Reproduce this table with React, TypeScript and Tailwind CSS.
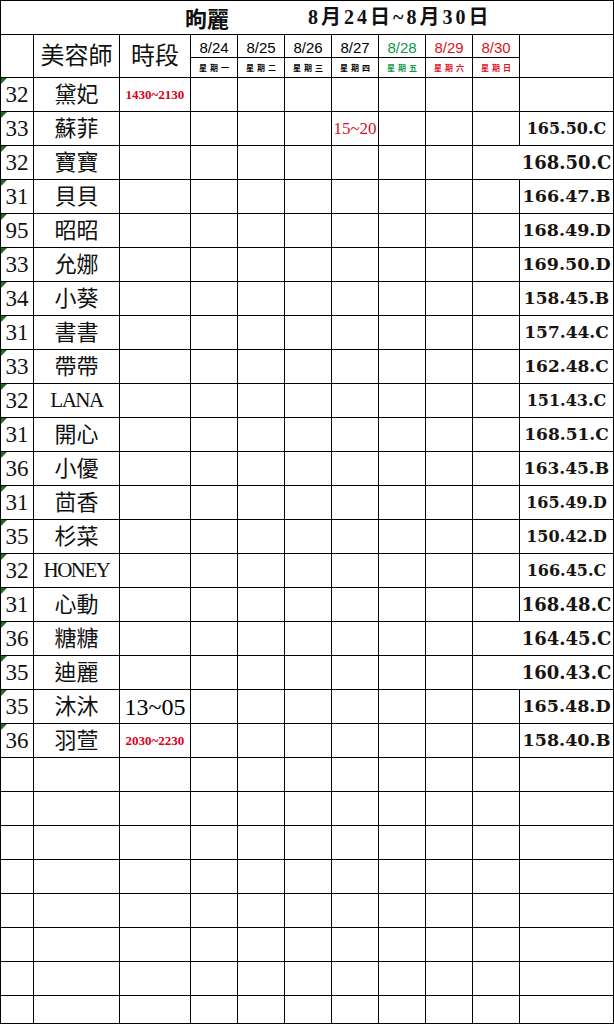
import React from "react"

type Row = {
  no: string
  name: string
  time?: { text: string; cls: string }
  mark?: string // text in the 8/27 column
  val?: string
  valCls?: string
  spill?: boolean // value runs over into the 8/30 column (no line between)
}

const serif = "font-['Liberation_Serif','Noto_Sans_CJK_TC',serif]"
const redSmall = "text-[13px] font-bold text-[#d90018]"

const rows: Row[] = [
  { no: "32", name: "黛妃", time: { text: "1430~2130", cls: redSmall } },
  { no: "33", name: "蘇菲", mark: "15~20", val: "165.50.C", valCls: "text-[16px]" },
  { no: "32", name: "寶寶", val: "168.50.C", valCls: "text-[18px]", spill: true },
  { no: "31", name: "貝貝", val: "166.47.B", valCls: "text-[17.5px]" },
  { no: "95", name: "昭昭", val: "168.49.D", valCls: "text-[17.5px]" },
  { no: "33", name: "允娜", val: "169.50.D", valCls: "text-[17.5px]" },
  { no: "34", name: "小葵", val: "158.45.B", valCls: "text-[17px]" },
  { no: "31", name: "書書", val: "157.44.C", valCls: "text-[17px]" },
  { no: "33", name: "帶帶", val: "162.48.C", valCls: "text-[17px]" },
  { no: "32", name: "LANA", val: "151.43.C", valCls: "text-[16px]" },
  { no: "31", name: "開心", val: "168.51.C", valCls: "text-[17px]" },
  { no: "36", name: "小優", val: "163.45.B", valCls: "text-[17px]" },
  { no: "31", name: "茴香", val: "165.49.D", valCls: "text-[16px]" },
  { no: "35", name: "杉菜", val: "150.42.D", valCls: "text-[16px]" },
  { no: "32", name: "HONEY", val: "166.45.C", valCls: "text-[16px]" },
  { no: "31", name: "心動", val: "168.48.C", valCls: "text-[18px]" },
  { no: "36", name: "糖糖", val: "164.45.C", valCls: "text-[18px]", spill: true },
  { no: "35", name: "迪麗", val: "160.43.C", valCls: "text-[18px]", spill: true },
  { no: "35", name: "沐沐", time: { text: "13~05", cls: "text-[24px] text-black" }, val: "165.48.D", valCls: "text-[17.5px]" },
  { no: "36", name: "羽萱", time: { text: "2030~2230", cls: redSmall }, val: "158.40.B", valCls: "text-[17.5px]" },
]

const days = [
  { d: "8/24", w: "星期一", c: "text-black" },
  { d: "8/25", w: "星期二", c: "text-black" },
  { d: "8/26", w: "星期三", c: "text-black" },
  { d: "8/27", w: "星期四", c: "text-black" },
  { d: "8/28", w: "星期五", c: "text-[#0e9a48]" },
  { d: "8/29", w: "星期六", c: "text-[#e0101e]" },
  { d: "8/30", w: "星期日", c: "text-[#e0101e]" },
]

const cell = "border-r border-b border-black flex items-center justify-center overflow-visible"

function DataRow({ r }: { r: Row }) {
  const latin = /^[A-Z]+$/.test(r.name)
  return (
    <>
      <div className={`${cell} relative ${serif} text-[23px] leading-none text-[#111]`}>
        <div className="absolute left-0 top-0 h-0 w-0 border-t-[6px] border-r-[6px] border-t-[#1c6e24] border-r-transparent" />
        {r.no}
      </div>
      <div className={`${cell} ${serif} leading-none text-[#111] ${latin ? "text-[21px] tracking-[-1.5px]" : "text-[22px]"}`}>
        {r.name}
      </div>
      <div className={`${cell} ${serif} leading-none whitespace-nowrap`}>
        {r.time && <span className={r.time.cls}>{r.time.text}</span>}
      </div>
      {days.map((d, i) => (
        <div
          key={d.d}
          className={`${cell} ${i === 6 && r.spill ? "border-r-0" : ""} ${serif} leading-none whitespace-nowrap`}
        >
          {i === 3 && r.mark && <span className="text-[17px] text-[#d9101c]">{r.mark}</span>}
        </div>
      ))}
      <div className={`${cell} whitespace-nowrap font-['DejaVu_Serif',serif] font-bold leading-none text-[#1a1410] ${r.valCls ?? ""}`}>
        {r.val}
      </div>
    </>
  )
}

function EmptyRow() {
  return (
    <>
      {Array.from({ length: 11 }).map((_, i) => (
        <div key={i} className="border-r border-b border-black" />
      ))}
    </>
  )
}

export default function App() {
  return (
    <div className="w-[614px] h-[1024px] overflow-hidden bg-white">
      <div className="grid grid-cols-[33px_86px_71px_47px_47px_47px_47px_47px_47px_47px_94px] grid-rows-[34px_23px_20px_repeat(27,34px)_28px] border-l border-t border-black">
        {/* title */}
        <div className="col-span-11 border-r border-b border-black flex items-center pl-[184px] pb-[2px]">
          <span className="font-['Noto_Sans_CJK_TC',sans-serif] font-bold text-[22px] leading-none text-[#111]">昫麗</span>
          <span className={`ml-[79px] ${serif} font-bold text-[20px] tracking-[3px] leading-none text-[#111]`}>
            8月24日~8月30日
          </span>
        </div>

        {/* header */}
        <div className="row-span-2 border-r border-b border-black" />
        <div className={`row-span-2 ${cell} ${serif} text-[24px] leading-none text-[#111]`}>美容師</div>
        <div className={`row-span-2 ${cell} ${serif} text-[24px] leading-none text-[#111]`}>時段</div>
        {days.map(d => (
          <div key={d.d} className={`${cell} font-['Liberation_Sans',sans-serif] text-[15px] leading-none pt-[2px] ${d.c}`}>
            {d.d}
          </div>
        ))}
        <div className="row-span-2 border-r border-b border-black" />
        {days.map(d => (
          <div key={d.w} className={`${cell} font-['Noto_Sans_CJK_TC',sans-serif] font-bold text-[8px] tracking-[3px] pl-[3px] leading-none ${d.c}`}>
            {d.w}
          </div>
        ))}

        {/* staff */}
        {rows.map(r => (
          <DataRow key={r.no + r.name} r={r} />
        ))}

        {/* blank rows */}
        {Array.from({ length: 8 }).map((_, i) => (
          <EmptyRow key={i} />
        ))}
      </div>
    </div>
  )
}
